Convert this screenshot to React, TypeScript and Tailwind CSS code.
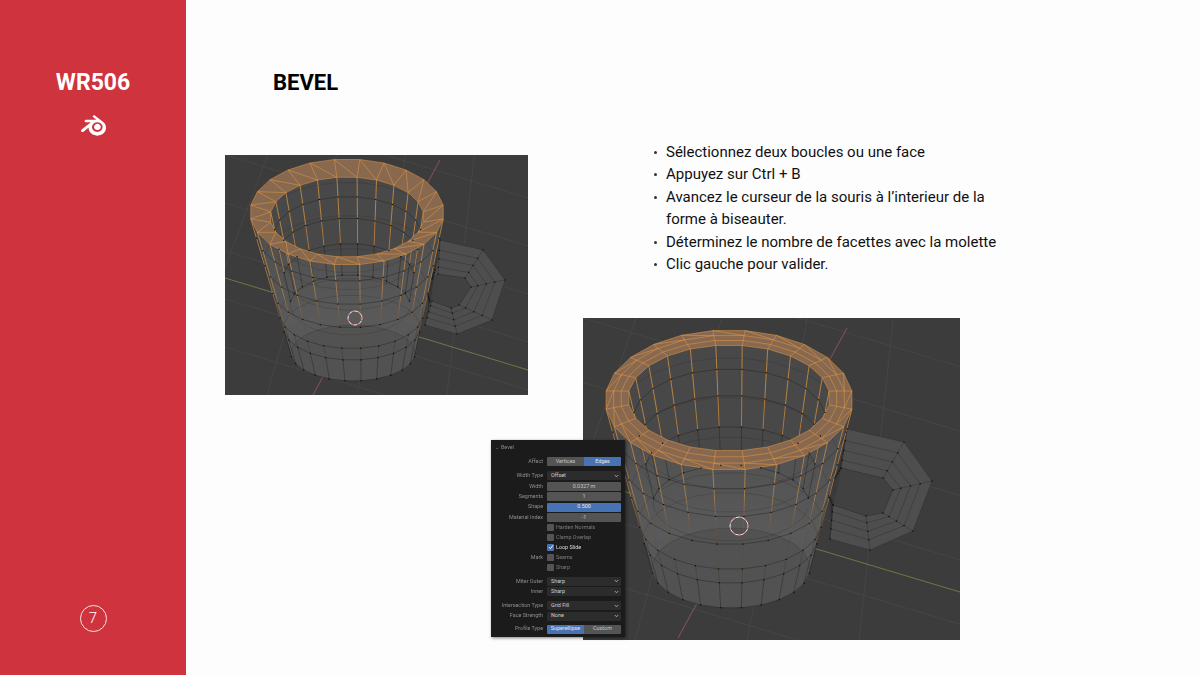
import React from 'react';
import { SiBlender } from 'react-icons/si';

type Pt = [number, number];
type Ell = { cx: number; cy: number; rx: number; ry: number };

type MugProps = {
  id: string;
  w: number;
  h: number;
  rimOuter: Ell;
  rimInner: Ell;
  base: Ell;
  floor: Ell;
  handleOuter: Pt[];
  handleInner: Pt[];
  redAxis: [Pt, Pt];
  greenAxis: [Pt, Pt];
  cursor: Pt;
  cursorR: number;
  rimRings: number;
};

const SEG = 24;

const mix = (a: number, b: number, t: number) => a + (b - a) * t;
const mixEll = (a: Ell, b: Ell, t: number): Ell => ({
  cx: mix(a.cx, b.cx, t),
  cy: mix(a.cy, b.cy, t),
  rx: mix(a.rx, b.rx, t),
  ry: mix(a.ry, b.ry, t),
});
const ringPts = (e: Ell): Pt[] =>
  Array.from({ length: SEG }, (_, i) => {
    const a = ((i + 0.5) / SEG) * Math.PI * 2;
    return [e.cx + e.rx * Math.cos(a), e.cy + e.ry * Math.sin(a)] as Pt;
  });
const closed = (pts: Pt[]) =>
  'M' + pts.map((p) => `${p[0].toFixed(1)} ${p[1].toFixed(1)}`).join('L') + 'Z';
const seg = (a: Pt, b: Pt) =>
  `M${a[0].toFixed(1)} ${a[1].toFixed(1)}L${b[0].toFixed(1)} ${b[1].toFixed(1)}`;

// with i + 0.5 steps the first half of a ring is the front, the second the back
const isFront = (i: number) => i < SEG / 2;

const WALL = [0.14, 0.34, 0.54, 0.72, 0.82, 1];
const INNER = [0.2, 0.42, 0.68, 1];

const Mug: React.FC<MugProps> = (m) => {
  const rim = ringPts(m.rimOuter);
  const rimIn = ringPts(m.rimInner);
  const baseRing = ringPts(m.base);
  const floorRing = ringPts(m.floor);
  const wallRings = WALL.map((t) => ringPts(mixEll(m.rimOuter, m.base, t)));
  const innerRings = INNER.map((t) => ringPts(mixEll(m.rimInner, m.floor, t)));

  let black = '';
  let xray = '';
  let verticals = '';
  let selected = '';
  const dots: Pt[] = [];

  for (let i = 0; i < SEG; i++) {
    const next = (i + 1) % SEG;
    if (isFront(i)) {
      wallRings.forEach((r) => {
        if (i < SEG / 2 - 1) black += seg(r[i], r[next]);
        dots.push(r[i]);
      });
      innerRings.forEach((r) => (xray += seg(r[i], r[next])));
      black += seg(wallRings[3][i], baseRing[i]);
      xray += seg(wallRings[0][i], wallRings[3][i]);
      verticals += seg(rim[i], wallRings[4][i]);
    } else {
      innerRings.forEach((r) => {
        if (i < SEG - 1) black += seg(r[i], r[next]);
        dots.push(r[i]);
      });
      wallRings.forEach((r) => (xray += seg(r[i], r[next])));
      black += seg(innerRings[1][i], floorRing[i]);
      verticals += seg(rimIn[i], innerRings[2][i]);
    }
  }

  // the selected rim: loops and diagonals
  const rimLoops = Array.from({ length: m.rimRings + 1 }, (_, k) =>
    ringPts(mixEll(m.rimOuter, m.rimInner, k / m.rimRings)),
  );
  rimLoops.forEach((r) => (selected += closed(r)));
  for (let i = 0; i < SEG; i++) {
    selected += seg(rim[i], rimIn[i]);
    selected += seg(rim[i], rimLoops[1][(i + 1) % SEG]);
  }

  // handle rings between the outer outline and the hole
  const hn = m.handleOuter.length;
  const handleRings = [0, 0.3, 0.55, 0.8, 1].map((t) =>
    m.handleOuter.map(
      (p, i) => [mix(p[0], m.handleInner[i][0], t), mix(p[1], m.handleInner[i][1], t)] as Pt,
    ),
  );
  let handleLines = '';
  handleRings.forEach((r) => (handleLines += closed(r)));
  for (let i = 0; i < hn; i++) handleLines += seg(m.handleOuter[i], m.handleInner[i]);
  dots.push(...handleRings.flat());

  // silhouette of the body
  const left = m.rimOuter.cx - m.rimOuter.rx;
  const right = m.rimOuter.cx + m.rimOuter.rx;
  const bodyPath = `M${left} ${m.rimOuter.cy}L${m.base.cx - m.base.rx} ${m.base.cy}L${m.base.cx + m.base.rx} ${m.base.cy}L${right} ${m.rimOuter.cy}Z`;

  // floor grid
  const grid: string[] = [];
  for (let i = -5; i < 8; i++) {
    const y0 = i * (m.h / 5);
    grid.push(seg([0, y0], [m.w, y0 + m.w * 0.3]));
  }
  for (let i = -1; i < 7; i++) {
    const x0 = (i + 0.4) * (m.w / 4.4);
    grid.push(seg([x0 + m.w * 0.05, 0], [x0 - m.w * (0.25 - i * 0.07), m.h]));
  }

  return (
    <svg
      width={m.w}
      height={m.h}
      viewBox={`0 0 ${m.w} ${m.h}`}
      className="block blur-[0.4px]"
    >
      <defs>
        <linearGradient
          id={`${m.id}-fade`}
          gradientUnits="userSpaceOnUse"
          x1="0"
          y1={m.rimOuter.cy}
          x2="0"
          y2={mix(m.rimOuter.cy, m.base.cy, 0.82)}
        >
          <stop offset="0" stopColor="#e89a3c" />
          <stop offset="0.7" stopColor="#c48e52" />
          <stop offset="1" stopColor="#8a6a4a" stopOpacity="0.35" />
        </linearGradient>
        <linearGradient
          id={`${m.id}-body`}
          gradientUnits="userSpaceOnUse"
          x1="0"
          y1={m.rimOuter.cy}
          x2="0"
          y2={m.base.cy + m.base.ry}
        >
          <stop offset="0" stopColor="#4c4c4e" />
          <stop offset="0.65" stopColor="#5a5a5a" />
          <stop offset="1" stopColor="#525252" />
        </linearGradient>
      </defs>
      <rect width={m.w} height={m.h} fill="#3c3c3c" />
      <path d={grid.join('')} stroke="#474747" strokeWidth="0.8" fill="none" />
      <path d={seg(m.redAxis[0], m.redAxis[1])} stroke="#7c4f5a" strokeWidth="1.1" />
      <path d={seg(m.greenAxis[0], m.greenAxis[1])} stroke="#747f45" strokeWidth="0.9" />

      <path d={closed(m.handleOuter) + closed(m.handleInner)} fill="#4e4e4e" fillRule="evenodd" />
      <path d={closed(m.handleInner)} fill="#414141" />

      <path d={bodyPath} fill={`url(#${m.id}-body)`} />
      <ellipse cx={m.base.cx} cy={m.base.cy} rx={m.base.rx} ry={m.base.ry} fill="#525252" />
      <ellipse
        cx={m.rimInner.cx}
        cy={m.rimInner.cy}
        rx={m.rimInner.rx}
        ry={m.rimInner.ry}
        fill="#484849"
      />

      <path d={handleLines} stroke="#2a2a2a" strokeWidth="0.4" fill="none" />
      <path d={xray} stroke="#1d1d1f" strokeWidth="0.4" fill="none" opacity="0.45" />
      <path d={black} stroke="#1d1d1f" strokeWidth="0.5" fill="none" opacity="0.8" />
      <path d={verticals} stroke={`url(#${m.id}-fade)`} strokeWidth="0.7" fill="none" />

      <path d={closed(rim) + closed(rimIn)} fill="#88684f" fillRule="evenodd" />
      <path d={selected} stroke="#e89c42" strokeWidth="0.5" fill="none" />

      {dots.map((p, i) => (
        <rect key={i} x={p[0] - 0.6} y={p[1] - 0.6} width="1.2" height="1.2" fill="#0c0c0c" />
      ))}

      <circle cx={m.cursor[0]} cy={m.cursor[1]} r={m.cursorR} fill="none" stroke="#ffffff" strokeWidth="0.9" />
      <circle
        cx={m.cursor[0]}
        cy={m.cursor[1]}
        r={m.cursorR}
        fill="none"
        stroke="#c9504f"
        strokeWidth="0.9"
        strokeDasharray="3 3"
      />
    </svg>
  );
};

const Btn: React.FC<{ active?: boolean; children: React.ReactNode }> = ({ active, children }) => (
  <div
    className={
      'flex-1 h-full flex items-center justify-center ' +
      (active ? 'bg-[#4772b3] text-[#e8e8e8]' : 'bg-[#545454] text-[#c4c4c4]')
    }
  >
    {children}
  </div>
);

const Row: React.FC<{ label?: string; gap?: string; children: React.ReactNode }> = ({
  label,
  gap = 'mt-[1.3px]',
  children,
}) => (
  <div className={`flex h-[9px] items-center ${gap}`}>
    <div className="w-[48px] shrink-0 mr-[4px] text-right text-[#8e8e8e] whitespace-nowrap">{label}</div>
    <div className="w-[74px] h-full flex rounded-[1px] overflow-hidden items-center">{children}</div>
  </div>
);

const Select: React.FC<{ value: string }> = ({ value }) => (
  <div className="w-full h-full bg-[#2c2c2c] flex items-center justify-between pl-[4px] pr-[2px] text-[#d0d0d0]">
    <span>{value}</span>
    <svg width="5" height="4" viewBox="0 0 5 4">
      <path d="M0.8 1L2.5 2.8L4.2 1" stroke="#bdbdbd" strokeWidth="0.8" fill="none" />
    </svg>
  </div>
);

const Check: React.FC<{ label: string; checked?: boolean }> = ({ label, checked }) => (
  <div className="flex items-center gap-[2px] w-full h-full">
    <div
      className={
        'w-[7px] h-[7px] rounded-[1px] flex items-center justify-center ' +
        (checked ? 'bg-[#4772b3]' : 'bg-[#545454]')
      }
    >
      {checked && (
        <svg width="6" height="6" viewBox="0 0 6 6">
          <path d="M1 3.2L2.4 4.6L5 1.4" stroke="#ffffff" strokeWidth="1" fill="none" />
        </svg>
      )}
    </div>
    <span className={checked ? 'text-[#dcdcdc]' : 'text-[#7e7e7e]'}>{label}</span>
  </div>
);

const BevelPanel: React.FC = () => (
  <div className="absolute left-[-92px] top-[122px] w-[134px] h-[197px] bg-[#1b1b1b] px-[4px] pt-[3px] text-[5.4px] leading-none font-['Roboto',sans-serif] blur-[0.35px] shadow-[1px_1px_3px_rgba(0,0,0,0.5)]">
    <div className="flex items-center h-[8px] gap-[2px] text-[#8a8a8a]">
      <span className="text-[5px]">⌄</span>
      <span>Bevel</span>
    </div>
    <Row label="Affect" gap="mt-[6px]">
      <Btn>Vertices</Btn>
      <Btn active>Edges</Btn>
    </Row>
    <Row label="Width Type" gap="mt-[5px]">
      <Select value="Offset" />
    </Row>
    <Row label="Width">
      <Btn>0.0327 m</Btn>
    </Row>
    <Row label="Segments">
      <Btn>1</Btn>
    </Row>
    <Row label="Shape" gap="mt-[1.6px]">
      <Btn active>0.500</Btn>
    </Row>
    <Row label="Material Index">
      <Btn>-1</Btn>
    </Row>
    <Row gap="mt-[1px]">
      <Check label="Harden Normals" />
    </Row>
    <Row gap="mt-[1px]">
      <Check label="Clamp Overlap" />
    </Row>
    <Row gap="mt-[1px]">
      <Check label="Loop Slide" checked />
    </Row>
    <Row label="Mark" gap="mt-[1px]">
      <Check label="Seams" />
    </Row>
    <Row gap="mt-[1px]">
      <Check label="Sharp" />
    </Row>
    <Row label="Miter Outer" gap="mt-[5px]">
      <Select value="Sharp" />
    </Row>
    <Row label="Inner">
      <Select value="Sharp" />
    </Row>
    <Row label="Intersection Type" gap="mt-[5px]">
      <Select value="Grid Fill" />
    </Row>
    <Row label="Face Strength">
      <Select value="None" />
    </Row>
    <Row label="Profile Type" gap="mt-[4px]">
      <Btn active>Superellipse</Btn>
      <Btn>Custom</Btn>
    </Row>
  </div>
);

const steps = [
  'Sélectionnez deux boucles ou une face',
  'Appuyez sur Ctrl + B',
  'Avancez le curseur de la souris à l’interieur de la forme à biseauter.',
  'Déterminez le nombre de facettes avec la molette',
  'Clic gauche pour valider.',
];

const App: React.FC = () => {
  return (
    <div className="w-[1200px] h-[675px] flex overflow-hidden font-['Roboto',sans-serif]">
      <aside className="w-[186px] h-full bg-[#cf333d] flex flex-col items-center text-white">
        <div className="mt-[70px] text-[23px] leading-[26px] font-bold">WR506</div>
        <SiBlender className="mt-[17px] text-[25px]" />
        <div className="mt-auto mb-[43px] w-[27px] h-[27px] rounded-full border-[1.5px] border-[#f6e3e4] flex items-center justify-center text-[15px] font-light">
          7
        </div>
      </aside>

      <main className="flex-1 h-full bg-[#fdfdfd]">
        <h1 className="ml-[87px] pt-[70px] text-[22px] leading-[26px] font-bold text-black">BEVEL</h1>
        <div className="flex mt-[45px]">
          <div className="w-[397px] pl-[39px] pt-[14px]">
            <Mug
              id="small"
              w={303}
              h={240}
              rimOuter={{ cx: 122, cy: 57, rx: 97, ry: 53 }}
              rimInner={{ cx: 122, cy: 62, rx: 77, ry: 40 }}
              base={{ cx: 128, cy: 198, rx: 62, ry: 28 }}
              floor={{ cx: 125, cy: 150, rx: 60, ry: 30 }}
              handleOuter={[[215, 85], [258, 95], [280, 125], [267, 165], [232, 179], [200, 170], [205, 147], [210, 115]]}
              handleInner={[[213, 119], [240, 123], [246, 132], [234, 150], [226, 153], [207, 146], [203, 140], [207, 124]]}
              redAxis={[[215, 5], [88, 240]]}
              greenAxis={[[0, 123], [303, 215]]}
              cursor={[130, 163]}
              cursorR={7}
              rimRings={1}
            />
          </div>
          <div className="flex-1">
            <ul className="pl-[69px] text-[15px] leading-[22.4px] text-[#111111]">
              {steps.map((step, index) => (
                <li key={index} className="flex">
                  <span className="w-[3px] h-[3px] mt-[10px] ml-[2px] mr-[9px] shrink-0 rounded-full bg-[#333333]" />
                  <span className="w-[340px]">{step}</span>
                </li>
              ))}
            </ul>
            <div className="relative w-[377px] mt-[43px]">
              <Mug
                id="large"
                w={377}
                h={322}
                rimOuter={{ cx: 146, cy: 82, rx: 124, ry: 70 }}
                rimInner={{ cx: 146, cy: 80, rx: 101, ry: 53 }}
                base={{ cx: 148, cy: 250, rx: 79, ry: 40 }}
                floor={{ cx: 148, cy: 185, rx: 78, ry: 38 }}
                handleOuter={[[264, 111], [321, 124], [349, 163], [330, 213], [287, 232], [247, 221], [250, 187], [258, 150]]}
                handleInner={[[258, 150], [300, 160], [310, 172], [300, 195], [283, 198], [250, 187], [246, 178], [252, 160]]}
                redAxis={[[264, 10], [95, 320]]}
                greenAxis={[[0, 161], [377, 274]]}
                cursor={[156, 208]}
                cursorR={9}
                rimRings={3}
              />
              <BevelPanel />
            </div>
          </div>
        </div>
      </main>
    </div>
  );
};

export default App;
